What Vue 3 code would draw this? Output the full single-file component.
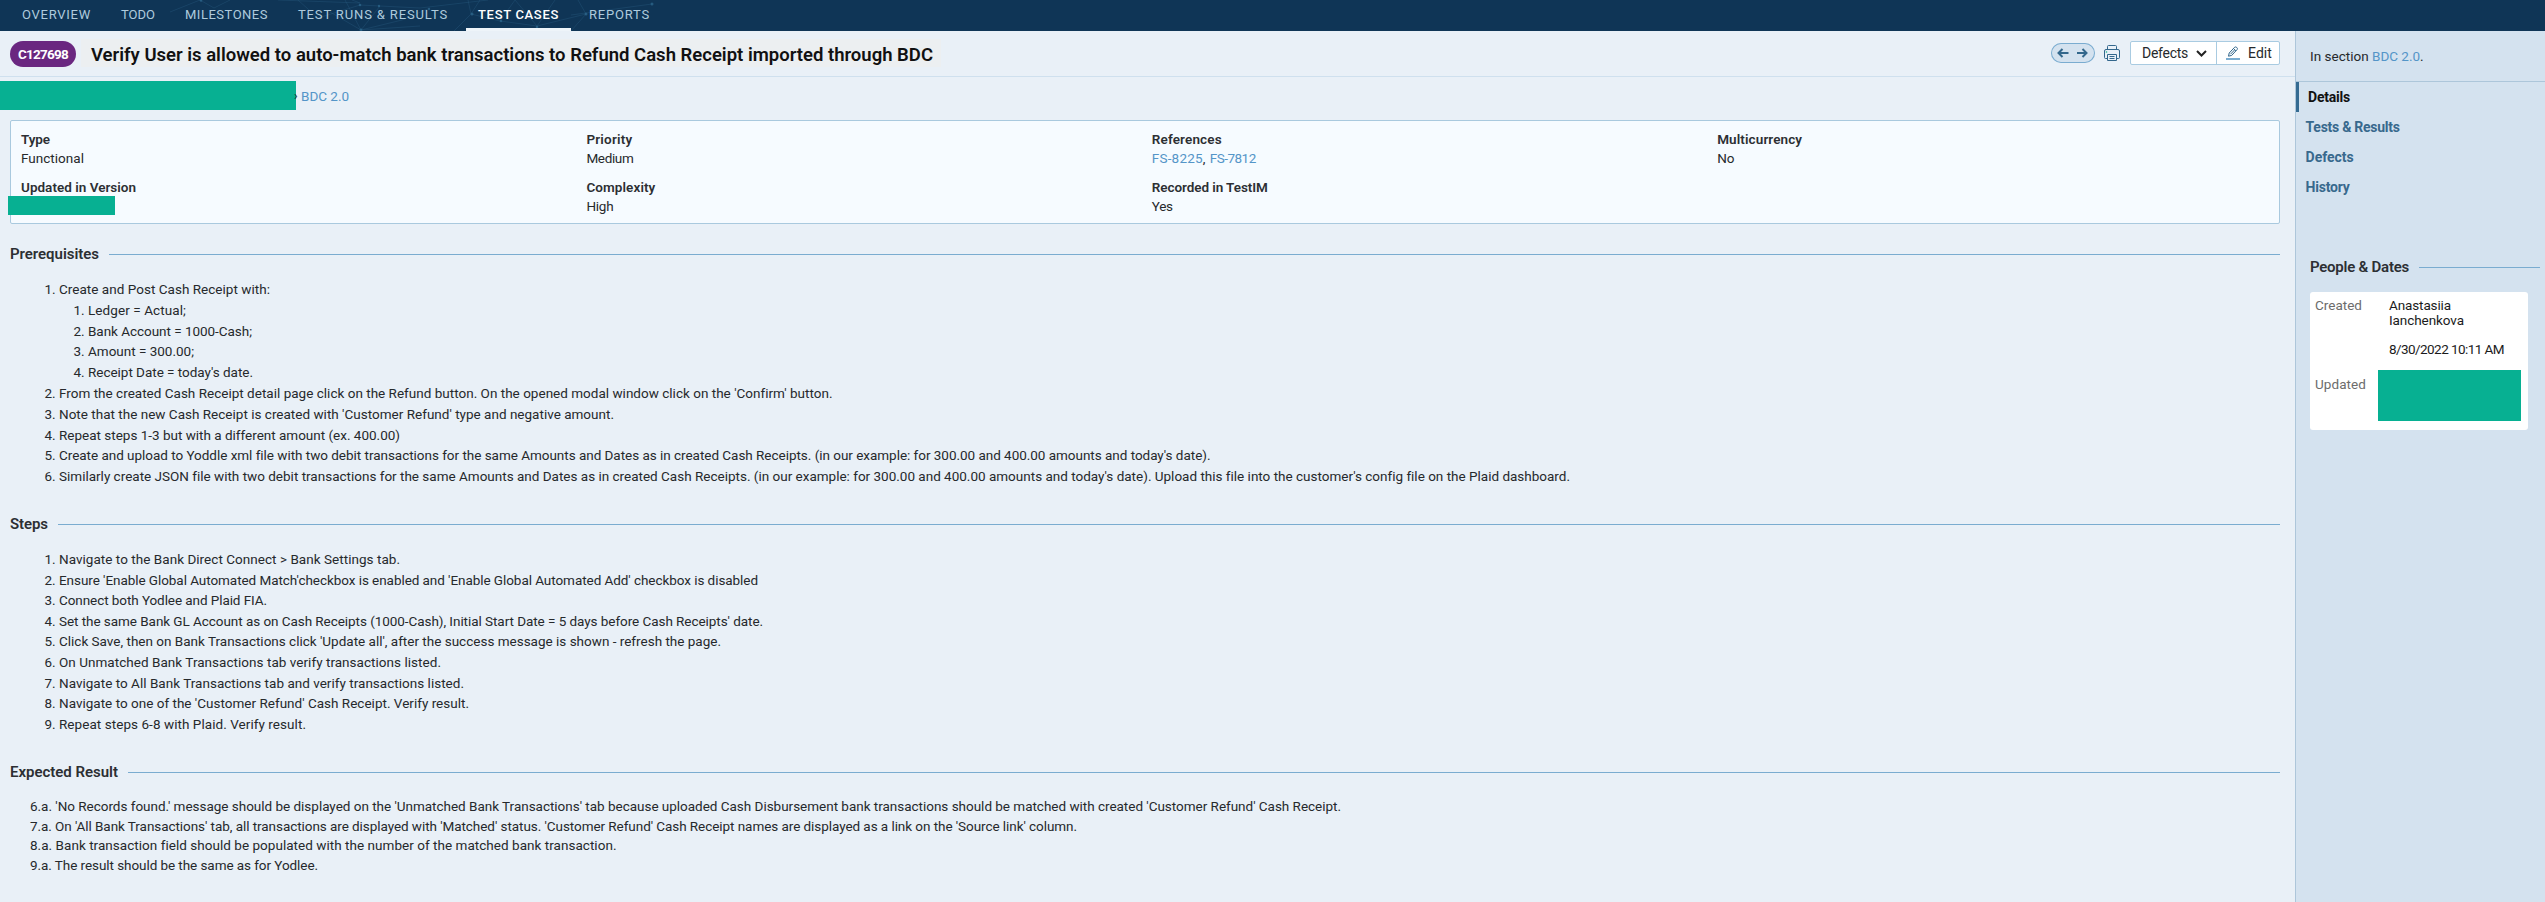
<script setup>
const nav = [
  { t: 'OVERVIEW', w: 69 },
  { t: 'TODO', w: 34 },
  { t: 'MILESTONES', w: 83 },
  { t: 'TEST RUNS & RESULTS', w: 150 },
  { t: 'TEST CASES', w: 81, active: true },
  { t: 'REPORTS', w: 61 },
]
const fields = [
  { l: 'Type', lw: 29, v: 'Functional', w: 63 },
  { l: 'Priority', lw: 46, v: 'Medium', w: 47 },
  { l: 'References', lw: 70, links: [{ t: 'FS-8225', w: 51 }, { t: 'FS-7812', w: 46 }] },
  { l: 'Multicurrency', lw: 85, v: 'No', w: 17 },
  { l: 'Updated in Version', lw: 115, masked: true },
  { l: 'Complexity', lw: 69, v: 'High', w: 27 },
  { l: 'Recorded in TestIM', lw: 116, v: 'Yes', w: 21 },
]
const prerequisites = [
  {
    t: 'Create and Post Cash Receipt with:', w: 211,
    children: [
      { t: 'Ledger = Actual;', w: 98 },
      { t: 'Bank Account = 1000-Cash;', w: 164 },
      { t: 'Amount = 300.00;', w: 106 },
      { t: "Receipt Date = today's date.", w: 165 },
    ],
  },
  { t: "From the created Cash Receipt detail page click on the Refund button. On the opened modal window click on the 'Confirm' button.", w: 773 },
  { t: "Note that the new Cash Receipt is created with 'Customer Refund' type and negative amount.", w: 555 },
  { t: 'Repeat steps 1-3 but with a different amount (ex. 400.00)', w: 341 },
  { t: "Create and upload to Yoddle xml file with two debit transactions for the same Amounts and Dates as in created Cash Receipts. (in our example: for 300.00 and 400.00 amounts and today's date).", w: 1151 },
  { t: "Similarly create JSON file with two debit transactions for the same Amounts and Dates as in created Cash Receipts. (in our example: for 300.00 and 400.00 amounts and today's date). Upload this file into the customer's config file on the Plaid dashboard.", w: 1509 },
]
const steps = [
  { t: 'Navigate to the Bank Direct Connect > Bank Settings tab.', w: 341 },
  { t: "Ensure 'Enable Global Automated Match'checkbox is enabled and 'Enable Global Automated Add' checkbox is disabled", w: 699 },
  { t: 'Connect both Yodlee and Plaid FIA.', w: 208 },
  { t: "Set the same Bank GL Account as on Cash Receipts (1000-Cash), Initial Start Date = 5 days before Cash Receipts' date.", w: 704 },
  { t: "Click Save, then on Bank Transactions click 'Update all', after the success message is shown - refresh the page.", w: 662 },
  { t: 'On Unmatched Bank Transactions tab verify transactions listed.', w: 382 },
  { t: 'Navigate to All Bank Transactions tab and verify transactions listed.', w: 405 },
  { t: "Navigate to one of the 'Customer Refund' Cash Receipt. Verify result.", w: 410 },
  { t: 'Repeat steps 6-8 with Plaid. Verify result.', w: 247 },
]
const results = [
  { t: "6.a. 'No Records found.' message should be displayed on the 'Unmatched Bank Transactions' tab because uploaded Cash Disbursement bank transactions should be matched with created 'Customer Refund' Cash Receipt.", w: 1311 },
  { t: "7.a. On 'All Bank Transactions' tab, all transactions are displayed with 'Matched' status. 'Customer Refund' Cash Receipt names are displayed as a link on the 'Source link' column.", w: 1047 },
  { t: '8.a. Bank transaction field should be populated with the number of the matched bank transaction.', w: 586 },
  { t: '9.a. The result should be the same as for Yodlee.', w: 288 },
]
const tabs = [
  { t: 'Details', w: 42, active: true },
  { t: 'Tests & Results', w: 94 },
  { t: 'Defects', w: 48 },
  { t: 'History', w: 44 },
]

// Adjusts tracking so a run of text takes the given width.
const vFit = {
  mounted(el, { value }) {
    const natural = el.getBoundingClientRect().width
    const n = el.textContent.length
    el.style.letterSpacing = `${(value - natural) / n}px`
  },
}
</script>

<template>
  <div class="page">
    <nav class="topbar">
      <svg class="net" width="500" height="31" viewBox="0 0 500 31">
        <g stroke="#2b5f84" stroke-width="0.7" fill="none" opacity="0.5">
          <path d="M128 0L148 18M108 0L190 3L182 0M190 5L148 18M190 5L210 6L250 8L318 0M160 12L191 30L210 6M191 30L175 0M191 30L250 26M191 30L232 20L260 8M284 31L301 14L310 0M301 14L298 0M330 21L345 0M330 21L301 14M367 26L345 0M367 26L385 0M330 21L367 26L416 14M401 15L482 4M401 31L416 14L408 0M0 12L30 0L44 8L60 0" />
        </g>
        <g fill="#2f6a90" opacity="0.7">
          <circle cx="31" cy="0.500" r="1.300" /><circle cx="190" cy="5" r="1.300" /><circle cx="209" cy="6" r="1.200" />
          <circle cx="191" cy="30" r="1.400" /><circle cx="259" cy="9" r="1.200" /><circle cx="302" cy="14" r="1.500" />
          <circle cx="331" cy="21" r="1.300" /><circle cx="367" cy="27" r="1.300" /><circle cx="416" cy="14" r="1.500" />
          <circle cx="482" cy="4" r="1.500" />
        </g>
      </svg>
      <a v-for="n in nav" :key="n.t" class="nav-item" :class="{ active: n.active }"><span v-fit="n.w">{{ n.t }}</span></a>
    </nav>

    <div class="body">
      <main class="main">
        <header class="head">
          <span class="badge"><span v-fit="50">C127698</span></span>
          <h1 class="title"><span v-fit="842">Verify User is allowed to auto-match bank transactions to Refund Cash Receipt imported through BDC</span></h1>
          <div class="tools">
            <div class="pager">
              <svg width="44" height="20" viewBox="0 0 44 20" fill="none" stroke="#33678c" stroke-width="2">
                <path d="M17.500 10H8M11.500 6L7.500 10L11.500 14M26 10H35.500M31.500 6L35.500 10L31.500 14" />
              </svg>
            </div>
            <svg class="printer" width="16" height="16" viewBox="0 0 16 16" fill="none" stroke="#33678c">
              <path d="M3.500 4.500V1.500Q3.500 0.500 4.500 0.500H11.500Q12.500 0.500 12.500 1.500V4.500M3 13.500H1.500Q0.500 13.500 0.500 12.500V6Q0.500 4.500 2 4.500H14Q15.500 4.500 15.500 6V12.500Q15.500 13.500 14.500 13.500H13M3.500 9.500H12.500V15.500H3.500ZM5.500 11.500H10.500M5.500 13.500H10.500" />
              <circle cx="2.500" cy="7" r="0.800" fill="#12b48c" stroke="none" />
            </svg>
            <div class="buttons">
              <div class="btn defects">
                <span v-fit="46">Defects</span>
                <svg width="11" height="7" viewBox="0 0 11 7" fill="none" stroke="#222" stroke-width="2"><path d="M1 1L5.500 5.500L10 1" /></svg>
              </div>
              <div class="btn edit">
                <svg width="14" height="14" viewBox="0 0 14 14" fill="none" stroke="#33678c">
                  <path d="M2.500 10.200L3.200 7L8.600 1.300Q9.600 0.500 10.700 1.400Q12 2.500 11.100 3.600L5.700 9.400ZM7.700 2.700L9.900 4.800M4.500 8.200L8.500 4" />
                  <path d="M0 13H14" stroke="#7aacd0" stroke-width="2" />
                </svg>
                <span v-fit="24">Edit</span>
              </div>
            </div>
          </div>
        </header>

        <div class="crumbs">
          <div class="mask crumb-mask"></div><span class="sep">›</span><a class="link" v-fit="48">BDC 2.0</a>
        </div>

        <section class="props">
          <div v-for="f in fields" :key="f.l" class="prop">
            <div class="label"><span v-fit="f.lw">{{ f.l }}</span></div>
            <div v-if="f.masked" class="mask prop-mask"></div>
            <div v-else-if="f.links" class="value links">
              <a class="link" v-fit="f.links[0].w">{{ f.links[0].t }}</a><span class="comma">,</span><a class="link" v-fit="f.links[1].w">{{ f.links[1].t }}</a>
            </div>
            <div v-else class="value"><span v-fit="f.w">{{ f.v }}</span></div>
          </div>
        </section>

        <h2 class="section"><span v-fit="89">Prerequisites</span></h2>
        <ol class="list">
          <li v-for="p in prerequisites" :key="p.t">
            <span v-fit="p.w">{{ p.t }}</span>
            <ol v-if="p.children">
              <li v-for="c in p.children" :key="c.t"><span v-fit="c.w">{{ c.t }}</span></li>
            </ol>
          </li>
        </ol>

        <h2 class="section steps-head"><span v-fit="38">Steps</span></h2>
        <ol class="list steps">
          <li v-for="s in steps" :key="s.t"><span v-fit="s.w">{{ s.t }}</span></li>
        </ol>

        <h2 class="section result-head"><span v-fit="108">Expected Result</span></h2>
        <div class="results">
          <p v-for="r in results" :key="r.t"><span v-fit="r.w">{{ r.t }}</span></p>
        </div>
      </main>

      <aside class="side">
        <div class="in-section"><span v-fit="62">In section </span><a class="link" v-fit="48">BDC 2.0</a>.</div>
        <div class="tabs">
          <a v-for="t in tabs" :key="t.t" class="tab" :class="{ active: t.active }"><span v-fit="t.w">{{ t.t }}</span></a>
        </div>
        <h2 class="section people"><span v-fit="99">People &amp; Dates</span></h2>
        <div class="card">
          <div class="row">
            <div class="key"><span v-fit="47">Created</span></div>
            <div class="val">
              <div><span v-fit="62">Anastasiia</span></div>
              <div><span v-fit="75">Ianchenkova</span></div>
              <div class="date"><span v-fit="115">8/30/2022 10:11 AM</span></div>
            </div>
          </div>
          <div class="row second">
            <div class="key"><span v-fit="51">Updated</span></div>
            <div class="mask card-mask"></div>
          </div>
        </div>
      </aside>
    </div>
  </div>
</template>

<style>
body { margin: 0; background: #e9f0f7; }
</style>

<style scoped>
.page {
  width: 2545px;
  height: 902px;
  overflow: hidden;
  display: flex;
  flex-direction: column;
  background: #e9f0f7;
  color: #26292c;
  font: 13.5px/20.8px Roboto, "Liberation Sans", sans-serif;
  white-space: nowrap;
}
.page * { box-sizing: border-box; }
.topbar {
  position: relative;
  flex: none;
  height: 31px;
  display: flex;
  gap: 6px;
  padding-left: 10px;
  background: #0f3556;
}
.net { position: absolute; left: 170px; top: 0; }
.nav-item {
  position: relative;
  height: 31px;
  padding: 0 12px;
  line-height: 29px;
  font-size: 13px;
  color: #aecbdd;
}
.nav-item.active { color: #fff; font-weight: 500; border-bottom: 3px solid #eef4f9; }
.body { flex: 1; display: flex; min-height: 0; }
.main { width: 2295px; flex: none; }
.head {
  height: 46px;
  display: flex;
  align-items: flex-start;
  padding: 8px 15px 0 10px;
  border-bottom: 1px solid #cfe0ee;
}
.badge {
  width: 66px;
  height: 26px;
  margin-top: 2px;
  border-radius: 13px;
  background: #6a2780;
  color: #fff;
  font-weight: 700;
  font-size: 13.5px;
  line-height: 26px;
  padding-left: 8px;
}
.title {
  margin: 0 0 0 5px;
  height: 28px;
  padding: 0 8px 0 10px;
  font-size: 18.5px;
  font-weight: 600;
  line-height: 32px;
  color: #111;
  background: #eceff1;
}
.tools { margin-left: auto; display: flex; align-items: flex-start; }
.pager {
  width: 44px;
  height: 20px;
  margin: 4px 9px 0 0;
  border-radius: 10px;
  background: #d4e2ef;
  box-shadow: inset 0 0 0 1px #7aacd0;
}
.pager svg, .printer { display: block; }
.printer { margin: 6px 10px 0 0; }
.buttons {
  width: 150px;
  height: 24px;
  margin-top: 2px;
  display: flex;
  background: #fff;
  border: 1px solid #a9cbe1;
  border-radius: 2px;
}
.btn { display: flex; align-items: center; font-size: 14px; }
.defects { width: 86px; padding-left: 11px; gap: 8px; border-right: 1px solid #a9cbe1; }
.edit { padding-left: 9px; gap: 8px; }
.crumbs { height: 43px; padding-top: 4px; display: flex; line-height: 31px; }
.mask { background: #07b092; }
.crumb-mask { width: 296px; height: 29px; }
.sep { width: 5px; font-size: 12px; text-indent: -2px; }
.link { color: #5495c8; }
.props {
  width: 2270px;
  height: 104px;
  margin-left: 10px;
  padding: 9px 0 0 10px;
  display: grid;
  grid-template-columns: repeat(4, 565.4px);
  grid-template-rows: 48px 48px;
  background: #f6fbff;
  border: 1px solid #a9c9de;
  border-radius: 2px;
}
.label { font-weight: 600; line-height: 18px; color: #2c2f33; }
.value { line-height: 20px; }
.links { display: flex; }
.comma { width: 7px; }
.prop-mask { position: relative; width: 107px; height: 19px; margin-left: -13px; }
.section {
  margin: 20px 15px 0 10px;
  height: 21px;
  display: flex;
  align-items: center;
  gap: 10px;
  font-size: 15px;
  line-height: 21px;
  font-weight: 600;
  color: #2c2f33;
}
.section::after { content: ""; flex: 1; height: 1px; background: #7aacd0; }
.list { margin: 14px 0 0; padding-left: 59px; }
.list ol { padding-left: 29px; margin: 0; }
.steps { line-height: 20.6px; }
.steps-head { margin-top: 27px; }
.result-head { margin-top: 27.6px; }
.results { padding: 14px 0 0 30px; }
.results p { margin: 0; line-height: 19.6px; }
.side {
  flex: 1;
  background: #d4e2ef;
  border-left: 1px solid #adc6da;
}
.in-section {
  height: 51px;
  padding: 10px 0 0 14px;
  line-height: 30px;
  border-bottom: 1px solid #adc6da;
  white-space: pre;
}
.tabs { display: flex; flex-direction: column; }
.tab {
  height: 30px;
  padding-left: 9.600px;
  font-size: 14px;
  font-weight: 700;
  line-height: 30px;
  color: #38698d;
}
.tab.active { padding-left: 9px; border-left: 3px solid #356b92; color: #111; }
.people { margin: 55px 5px 0 14px; }
.card {
  width: 218px;
  height: 138px;
  margin: 14px 0 0 14px;
  padding: 6px 5px;
  background: #fff;
  border-radius: 3px;
  line-height: 15px;
  color: #1b1b1b;
}
.row { display: flex; }
.key { width: 74px; color: #6c6c6c; }
.date { margin-top: 14px; }
.second { margin-top: 20px; }
.second .key { width: 63px; }
.card-mask { width: 143px; height: 51px; margin-top: -7px; }
</style>
